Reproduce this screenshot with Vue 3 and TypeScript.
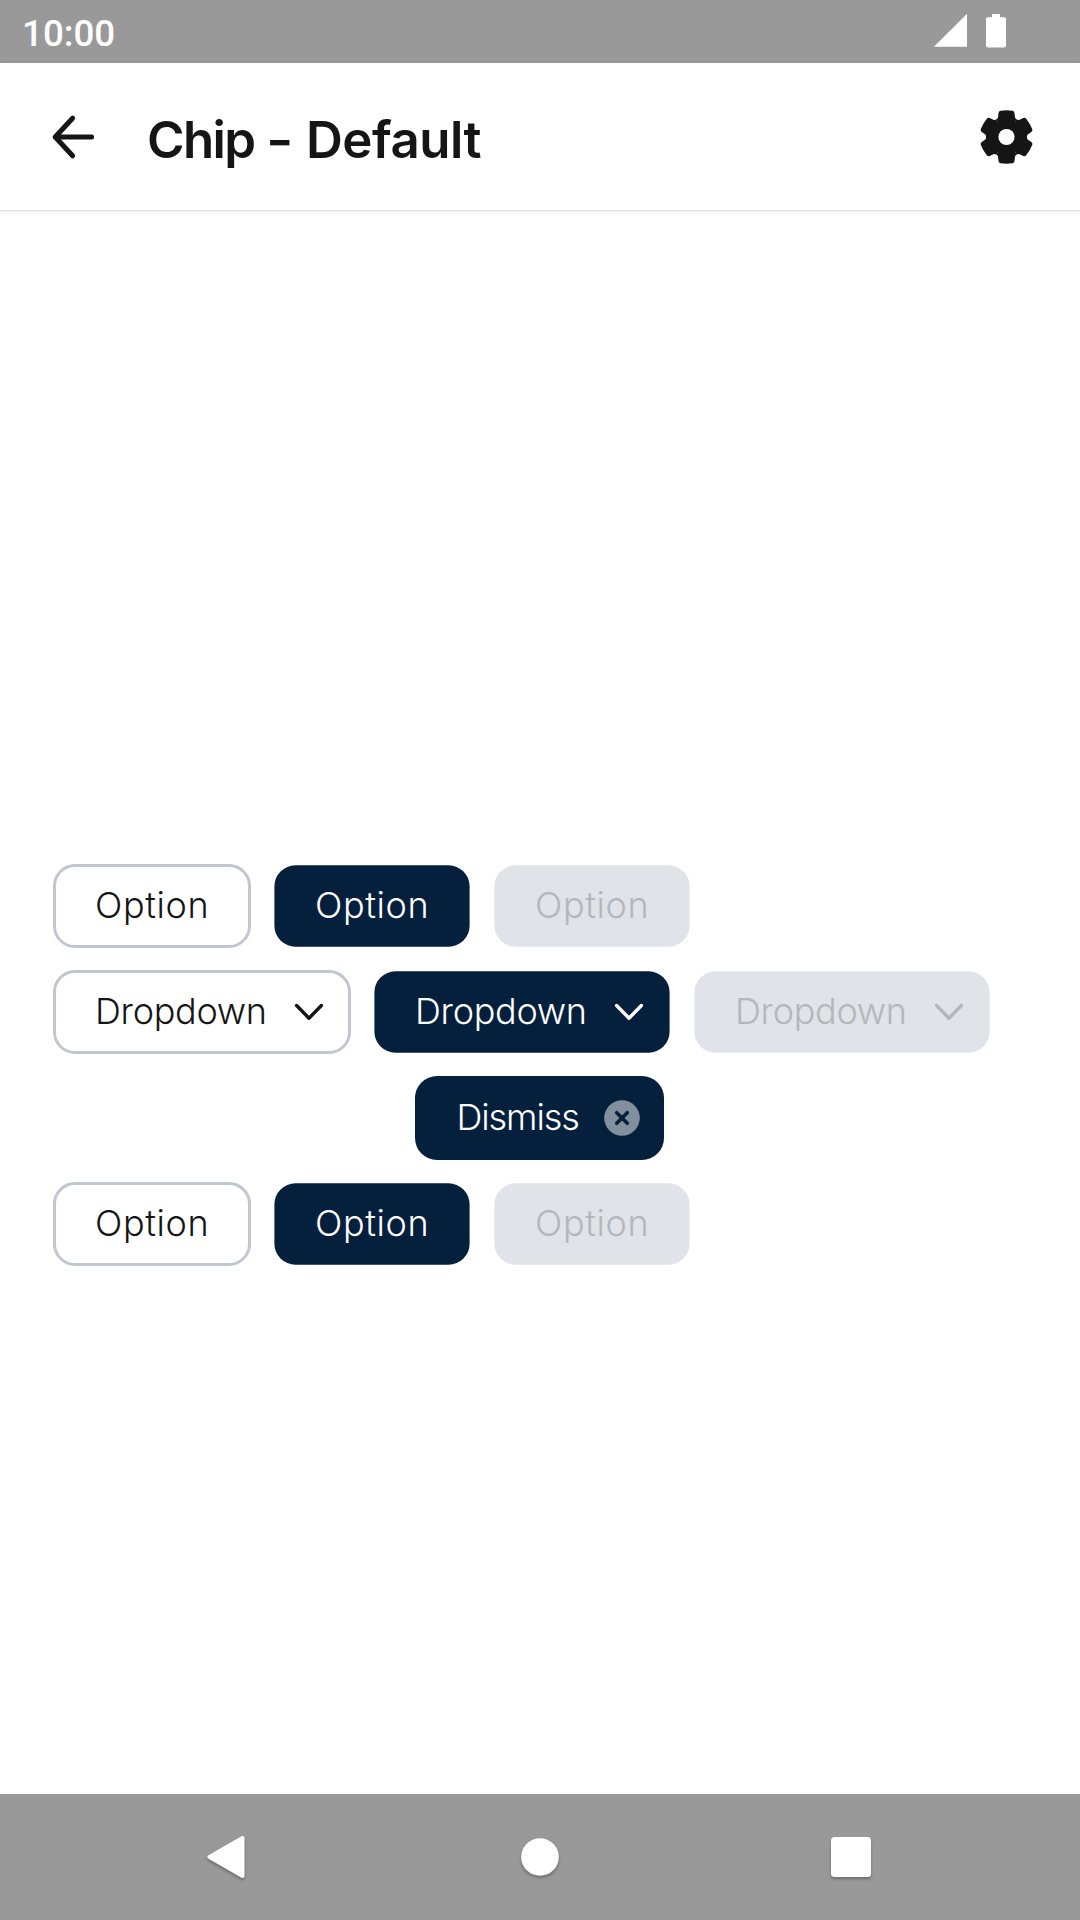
<script setup lang="ts">
type Tone = 'outlined' | 'selected' | 'disabled'
interface Chip { label: string; tone: Tone; kind: 'option' | 'dropdown' | 'dismiss' }

const tones: Tone[] = ['outlined', 'selected', 'disabled']
const options: Chip[] = tones.map((tone) => ({ label: 'Option', tone, kind: 'option' }))
const dropdowns: Chip[] = tones.map((tone) => ({ label: 'Dropdown', tone, kind: 'dropdown' }))
const rows: Chip[][] = [
  options,
  dropdowns,
  [{ label: 'Dismiss', tone: 'selected', kind: 'dismiss' }],
  options,
]
const teeth = [0, 60, 120, 180, 240, 300]
</script>

<template>
  <div class="screen">
    <div class="status">
      <span class="time">10:00</span>
      <svg class="indicators" width="76" height="36" viewBox="0 0 76 36">
        <path d="M4.2 34.7V34.5L37 1.8V34.7Z" />
        <path d="M62 2h8v3.2h4q2 0 2 2V33.5q0 2-2 2H58q-2 0-2-2V7.2q0-2 2-2h4z" />
      </svg>
    </div>

    <header class="bar">
      <button class="back" aria-label="Back">
        <svg width="48" height="48" viewBox="-24 -24 48 48">
          <path d="M19.6 0H-16.8M.6-18.8L-16.8 0L.6 18.8" />
        </svg>
      </button>
      <h1><span class="name">Chip</span> <span class="dash">-</span> <span class="variant">Default</span></h1>
      <button class="settings" aria-label="Settings">
        <svg width="56" height="56" viewBox="-28.5 -28 56 56">
          <path
            v-for="angle in teeth"
            :key="angle"
            :transform="`rotate(${angle})`"
            d="M0 0L-10.25-17.75Q-8.6-18.2-8.4-20L-8-24Q-7.8-25.9-6-26.2Q0-27.1 6-26.2Q7.8-25.9 8-24L8.4-20Q8.6-18.2 10.25-17.75Z"
          />
          <circle class="core" r="17" />
          <circle class="hole" r="8.1" />
        </svg>
      </button>
    </header>

    <main class="content">
      <div v-for="(row, i) in rows" :key="i" class="row" :class="{ centered: row.length === 1 }">
        <button v-for="chip in row" :key="chip.tone" class="chip" :class="[chip.tone, chip.kind]">
          <span class="label">{{ chip.label }}</span>
          <svg v-if="chip.kind === 'dropdown'" class="chevron" width="32" height="22" viewBox="0 0 32 22">
            <path d="M3.6 4.5L16 17.2L28.4 4.5" />
          </svg>
          <svg v-if="chip.kind === 'dismiss'" class="clear" width="36" height="36" viewBox="-18 -18 36 36">
            <circle r="17.8" />
            <path d="M-5.3-5.3L5.3 5.3M5.3-5.3L-5.3 5.3" />
          </svg>
        </button>
      </div>
    </main>

    <nav class="nav">
      <svg width="60" height="60" viewBox="-30 -30 60 60">
        <path d="M-16.5 0L16.5-19V19Z" stroke-width="4" stroke-linejoin="round" />
      </svg>
      <svg width="60" height="60" viewBox="-30 -30 60 60"><circle r="18.8" /></svg>
      <svg width="60" height="60" viewBox="-30 -30 60 60">
        <rect x="-20" y="-20" width="40" height="40" rx="3.5" />
      </svg>
    </nav>
  </div>
</template>

<style>
body {
  margin: 0;
}
</style>

<style scoped>
.screen {
  width: 1080px;
  height: 1920px;
  display: flex;
  flex-direction: column;
  background: #fff;
  color: #151515;
  font-family: Inter, 'Liberation Sans', sans-serif;
  overflow: hidden;
}
button {
  padding: 0;
  border: 0;
  background: none;
  color: inherit;
  font: inherit;
  text-align: left;
}
svg {
  display: block;
  flex: none;
}
.status {
  height: 63px;
  flex: none;
  box-sizing: border-box;
  padding: 0 74px 0 22px;
  display: flex;
  justify-content: space-between;
  background: #999;
  color: #fff;
}
.time {
  font: 500 36.75px/67px Roboto, sans-serif;
}
.indicators {
  margin-top: 12px;
  fill: #fff;
}
.bar {
  height: 147px;
  flex: none;
  box-sizing: border-box;
  padding: 0 46px 0 48px;
  display: flex;
  align-items: center;
  box-shadow: 0 1px 1px rgba(0, 0, 0, 0.07), 0 2px 6px rgba(0, 0, 0, 0.07);
}
.back path {
  fill: none;
  stroke: #151515;
  stroke-width: 5;
  stroke-linecap: round;
  stroke-linejoin: round;
}
h1 {
  flex: 1;
  margin: 0 0 0 51px;
  padding-top: 6px;
  font-size: 51px;
  font-weight: 600;
  line-height: 60px;
  white-space: nowrap;
}
.name {
  letter-spacing: -1.6px;
}
.dash {
  display: inline-block;
  margin: 0 1px;
  transform: scaleX(1.16);
}
.variant {
  letter-spacing: -0.5px;
}
.settings path,
.core {
  fill: #151515;
}
.hole {
  fill: #fff;
}
.content {
  flex: 1;
  box-sizing: border-box;
  display: flex;
  flex-direction: column;
  justify-content: center;
  gap: 22px;
  padding: 126px 53px 0;
}
.row {
  display: flex;
  gap: 22px;
}
.centered {
  justify-content: center;
  padding-right: 2px;
}
.chip {
  box-sizing: border-box;
  width: 198px;
  height: 84px;
  flex: none;
  padding-left: 42px;
  display: flex;
  align-items: center;
  border-radius: 22px;
}
.outlined {
  padding-left: 39px;
  border: 3px solid #c1c7d0;
}
.selected {
  background-color: #05203c;
  color: #fff;
}
.disabled {
  background-color: #e0e3e8;
  color: #b3b7bc;
}
.selected:not(.dismiss),
.disabled {
  clip-path: inset(1.3px 1.4px round 21px);
}
.dropdown {
  width: 298px;
}
.dismiss {
  width: 249px;
}
.label {
  margin-top: -2px;
  font-size: 36px;
  font-weight: 350;
  line-height: 44px;
  white-space: nowrap;
}
.option .label {
  letter-spacing: 0.6px;
}
.dropdown .label {
  width: 198px;
  letter-spacing: -0.3px;
}
.dismiss .label {
  width: 147px;
  letter-spacing: -1.1px;
}
.chevron path {
  fill: none;
  stroke: currentColor;
  stroke-width: 3.4;
  stroke-linecap: round;
  stroke-linejoin: round;
}
.clear circle {
  fill: #828f9d;
}
.clear path {
  fill: none;
  stroke: #05203c;
  stroke-width: 3.6;
  stroke-linecap: round;
}
.nav {
  height: 126px;
  flex: none;
  box-sizing: border-box;
  padding: 0 199px 0 195.5px;
  display: flex;
  align-items: center;
  justify-content: space-between;
  background: #999;
}
.nav svg {
  fill: #fff;
  stroke: #fff;
  stroke-width: 0;
  filter: drop-shadow(0 2px 1.5px rgba(0, 0, 0, 0.3));
}
.nav svg:nth-child(2) {
  margin-left: 3.5px;
}
</style>
